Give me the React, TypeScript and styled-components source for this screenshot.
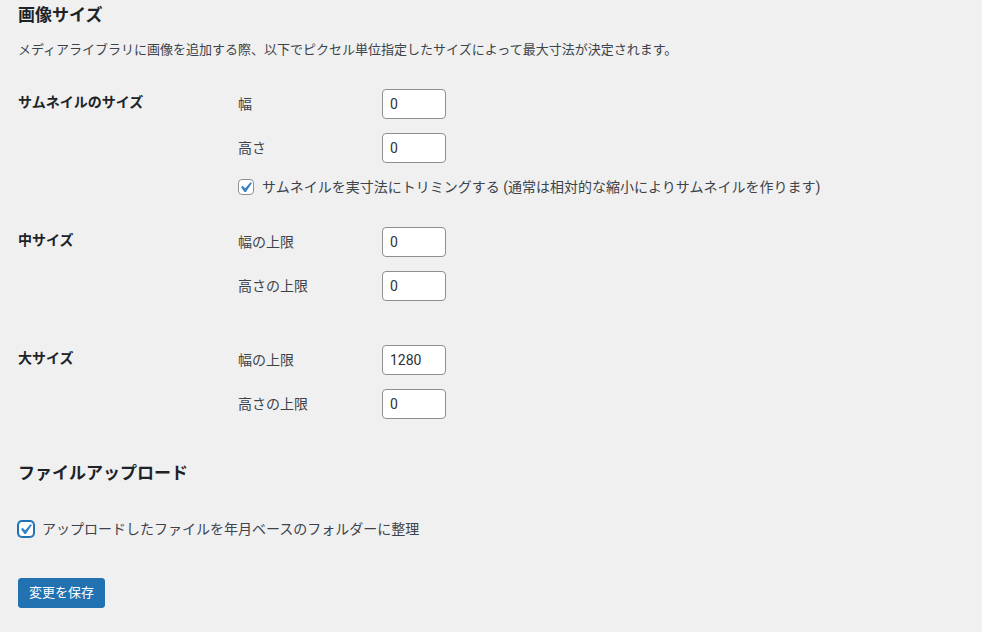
import React, { FC } from 'react';
import styled, { createGlobalStyle, css } from 'styled-components';

const GlobalStyle = createGlobalStyle`
  html, body {
    margin: 0;
    padding: 0;
    background: #f0f0f1;
  }
  body {
    font-family: Roboto, "Noto Sans CJK JP", sans-serif;
    font-size: 13px;
    line-height: 1.4;
    color: #3c434a;
  }
`;

const Page = styled.div`
  padding: 0 20px 0 18px;
`;

const Title = styled.h2<{ $top: number }>`
  margin: ${(p) => p.$top}px 0 0;
  font-size: 17px;
  line-height: 22px;
  font-weight: 600;
  color: #1d2327;
`;

const Description = styled.p`
  margin: 14px 0 0;
  line-height: 20px;
`;

const FormTable = styled.div`
  margin-top: 14px;
`;

const Row = styled.div<{ $extra?: number }>`
  display: grid;
  grid-template-columns: 220px 1fr;
  padding-bottom: ${(p) => p.$extra ?? 0}px;
`;

const RowLabel = styled.div`
  padding: 20px 0;
  font-size: 14px;
  font-weight: 600;
  color: #1d2327;
  line-height: 17px;
`;

const Fields = styled.div`
  padding: 15px 0;
  display: flex;
  flex-direction: column;
  gap: 14px;
`;

const Field = styled.div`
  display: flex;
  align-items: center;
`;

const FieldLabel = styled.label`
  width: 144px;
  flex-shrink: 0;
  font-size: 14px;
  line-height: 20px;
`;

const NumberInput = styled.input`
  box-sizing: border-box;
  width: 64px;
  height: 30px;
  margin: 0;
  padding: 0 7px;
  border: 1px solid #8c8f94;
  border-radius: 4px;
  background: #fff;
  font-family: Roboto, "Noto Sans CJK JP", sans-serif;
  font-size: 14px;
  color: #2c3338;
  outline: none;
`;

const CheckRow = styled.label<{ $top?: number }>`
  display: flex;
  align-items: center;
  gap: 8px;
  font-size: 14px;
  line-height: 20px;
  margin-top: ${(p) => p.$top ?? 0}px;
  cursor: pointer;
`;

const Box = styled.span<{ $focused?: boolean }>`
  position: relative;
  box-sizing: border-box;
  width: 16px;
  height: 16px;
  flex-shrink: 0;
  border: 1px solid #8c8f94;
  border-radius: 4px;
  background: #fff;
  ${(p) =>
    p.$focused &&
    css`
      border-color: #2271b1;
      box-shadow: 0 0 0 1px #2271b1;
    `}

  svg {
    position: absolute;
    left: -4px;
    top: -3px;
    width: 21px;
    height: 21px;
  }
`;

const PrimaryButton = styled.button`
  margin-top: 39px;
  height: 30px;
  padding: 0 10px;
  border: 1px solid #2271b1;
  border-radius: 3px;
  background: #2271b1;
  color: #fff;
  font-family: Roboto, "Noto Sans CJK JP", sans-serif;
  font-size: 13px;
  line-height: 28px;
  cursor: pointer;
`;

const Checkbox: FC<{ focused?: boolean }> = ({ focused }) => (
  <Box $focused={focused}>
    <svg viewBox="0 0 20 20">
      <path d="M14.83 4.89l1.34.94-5.81 8.38H9.02L5.78 9.67l1.34-1.25 2.57 2.4z" fill="#3582c4" />
    </svg>
  </Box>
);

type SizeField = { id: string; label: string; value: string };

const sizes: { title: string; fields: SizeField[]; extra?: number }[] = [
  {
    title: 'サムネイルのサイズ',
    fields: [
      { id: 'thumbnail_size_w', label: '幅', value: '0' },
      { id: 'thumbnail_size_h', label: '高さ', value: '0' },
    ],
  },
  {
    title: '中サイズ',
    fields: [
      { id: 'medium_size_w', label: '幅の上限', value: '0' },
      { id: 'medium_size_h', label: '高さの上限', value: '0' },
    ],
    extra: 14,
  },
  {
    title: '大サイズ',
    fields: [
      { id: 'large_size_w', label: '幅の上限', value: '1280' },
      { id: 'large_size_h', label: '高さの上限', value: '0' },
    ],
    extra: 14,
  },
];

const App: FC = () => (
  <Page>
    <GlobalStyle />
    <Title $top={4}>画像サイズ</Title>
    <Description>
      メディアライブラリに画像を追加する際、以下でピクセル単位指定したサイズによって最大寸法が決定されます。
    </Description>
    <FormTable>
      {sizes.map((s, i) => (
        <Row key={s.title} $extra={s.extra}>
          <RowLabel>{s.title}</RowLabel>
          <Fields>
            {s.fields.map((f) => (
              <Field key={f.id}>
                <FieldLabel htmlFor={f.id}>{f.label}</FieldLabel>
                <NumberInput id={f.id} type="text" defaultValue={f.value} />
              </Field>
            ))}
            {i === 0 && (
              <CheckRow>
                <Checkbox />
                サムネイルを実寸法にトリミングする (通常は相対的な縮小によりサムネイルを作ります)
              </CheckRow>
            )}
          </Fields>
        </Row>
      ))}
    </FormTable>
    <Title $top={14}>ファイルアップロード</Title>
    <CheckRow $top={35}>
      <Checkbox focused />
      アップロードしたファイルを年月ベースのフォルダーに整理
    </CheckRow>
    <PrimaryButton type="submit">変更を保存</PrimaryButton>
  </Page>
);

export default App;
